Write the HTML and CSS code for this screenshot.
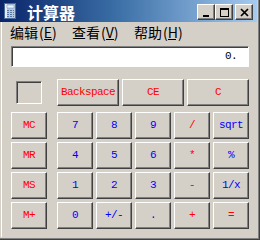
FILE: index.html
```html
<!doctype html>
<html lang="zh-CN">
<head>
	<meta charset="UTF-8">
	<title>计算器</title>
	<link rel="stylesheet" href="styles.css">
</head>
<body>
	<div class="window">
		<div class="titlebar">
			<svg class="app-icon" width="12" height="16" viewBox="0 0 12 16">
				<rect x="0.5" y="0.5" width="11" height="15" fill="#b4c8e0" stroke="#4a6a9a"/>
				<rect x="1" y="1" width="2" height="14" fill="#e4eef8"/>
				<rect x="3" y="2" width="7" height="3" fill="#eef4fa" stroke="#6a88b0" stroke-width="0.5"/>
				<g fill="#5a78a4">
					<rect x="3" y="7" width="2" height="1"/><rect x="6" y="7" width="2" height="1"/><rect x="9" y="7" width="1" height="1"/>
					<rect x="3" y="9" width="2" height="1"/><rect x="6" y="9" width="2" height="1"/><rect x="9" y="9" width="1" height="1"/>
					<rect x="3" y="11" width="2" height="1"/><rect x="6" y="11" width="2" height="1"/><rect x="9" y="11" width="1" height="1"/>
					<rect x="3" y="13" width="2" height="1"/><rect x="6" y="13" width="2" height="1"/><rect x="9" y="13" width="1" height="1"/>
				</g>
			</svg>
			<span class="title">计算器</span>
			<div class="caption">
				<span class="cap-btn">
					<svg width="16" height="14" viewBox="0 0 16 14"><rect x="5" y="10" width="6" height="2" fill="#000"/></svg>
				</span>
				<span class="cap-btn">
					<svg width="16" height="14" viewBox="0 0 16 14"><path d="M4 3h9v9h-9z M5 5v6h7v-6z" fill="#000" fill-rule="evenodd"/></svg>
				</span>
				<span class="cap-btn close">
					<svg width="16" height="14" viewBox="0 0 16 14"><path d="M5 4L12 11M12 4L5 11" stroke="#000" stroke-width="1.7"/></svg>
				</span>
			</div>
		</div>
		<div class="content">
			<div class="menubar">
				<span class="menu">编辑<span class="acc">(E)</span></span>
				<span class="menu">查看<span class="acc">(V)</span></span>
				<span class="menu">帮助<span class="acc">(H)</span></span>
			</div>
			<div class="client">
				<div class="display">0.</div>
				<div class="keys">
					<div class="side">
						<div class="mem-slot"><div class="mem"></div></div>
						<button class="btn red">MC</button>
						<button class="btn red">MR</button>
						<button class="btn red">MS</button>
						<button class="btn red">M+</button>
					</div>
					<div class="main">
						<div class="top-row">
							<button class="btn red">Backspace</button>
							<button class="btn red">CE</button>
							<button class="btn red">C</button>
						</div>
						<div class="grid">
							<button class="btn">7</button>
							<button class="btn">8</button>
							<button class="btn">9</button>
							<button class="btn red">/</button>
							<button class="btn">sqrt</button>
							<button class="btn">4</button>
							<button class="btn">5</button>
							<button class="btn">6</button>
							<button class="btn red">*</button>
							<button class="btn">%</button>
							<button class="btn">1</button>
							<button class="btn">2</button>
							<button class="btn">3</button>
							<button class="btn red">-</button>
							<button class="btn">1/x</button>
							<button class="btn">0</button>
							<button class="btn">+/-</button>
							<button class="btn">.</button>
							<button class="btn red">+</button>
							<button class="btn red">=</button>
						</div>
					</div>
				</div>
			</div>
		</div>
	</div>
</body>
</html>
```

FILE: styles.css
```css
*{
	box-sizing: border-box;
}
body{
	margin: 0;
	background: #d4d0c8;
}
.window{
	width: 260px;
	height: 240px;
	background: #d4d0c8;
	border-right: 1px solid #404040;
	border-bottom: 1px solid #404040;
	box-shadow: inset -1px -1px #808080;
	padding: 0 2px 2px 0;
	display: flex;
	flex-direction: column;
}
.titlebar{
	height: 22px;
	flex: none;
	background: linear-gradient(to right, #0a246a 0%, #3a6ea5 45%, #a6caf0 100%);
	display: flex;
	align-items: flex-start;
	padding: 3px 4px 0 4px;
}
.app-icon{
	flex: none;
}
.title{
	color: #fff;
	font: bold 16px/16px "Noto Sans CJK SC", sans-serif;
	margin: 1px 0 0 11px;
}
.caption{
	margin: 1px 0 0 auto;
	display: flex;
}
.cap-btn{
	width: 18px;
	height: 16px;
	background: #d4d0c8;
	border: 1px solid;
	border-color: #fff #404040 #404040 #fff;
	box-shadow: inset -1px -1px #808080;
}
.cap-btn svg{
	display: block;
}
.cap-btn.close{
	margin-left: 2px;
}
.content{
	flex: 1;
	margin-left: 1px;
	border-left: 1px solid #fff;
}
.menubar{
	height: 19px;
	display: flex;
	padding: 2px 0 0 8px;
	font: 14px/17px "Noto Sans CJK SC", sans-serif;
	color: #000;
}
.menu{
	width: 62px;
	white-space: nowrap;
}
.acc{
	display: inline-block;
	padding: 0 1px;
	background: linear-gradient(#000, #000) no-repeat 6px 15px / 8px 1px;
}
.client{
	padding: 5px 0 0 9px;
}
.display{
	width: 238px;
	height: 21px;
	background: #fff;
	border: 1px solid;
	border-color: #808080 #fff #fff #808080;
	box-shadow: inset 1px 1px #404040;
	text-align: right;
	padding-right: 11px;
	font: 11px/19px "Liberation Mono", monospace;
	letter-spacing: -0.6px;
	color: #000;
}
.keys{
	display: flex;
	margin-top: 12px;
}
.side{
	width: 36px;
	margin-right: 10px;
	display: flex;
	flex-direction: column;
	gap: 3px;
}
.mem-slot{
	height: 27px;
	margin-bottom: 3px;
	display: flex;
	align-items: center;
	justify-content: center;
}
.mem{
	width: 26px;
	height: 23px;
	border: 1px solid;
	border-color: #808080 #fff #fff #808080;
	box-shadow: inset 1px 1px #404040;
}
.main{
	width: 192px;
	display: flex;
	flex-direction: column;
}
.top-row{
	display: grid;
	grid-template-columns: repeat(3, 1fr);
	gap: 3px;
	height: 27px;
	margin-bottom: 6px;
}
.grid{
	display: grid;
	grid-template-columns: repeat(5, 36px);
	grid-auto-rows: 27px;
	gap: 3px;
}
.btn{
	height: 27px;
	margin: 0;
	padding: 0;
	background: #d4d0c8;
	border: 1px solid;
	border-color: #fff #404040 #404040 #fff;
	box-shadow: inset -1px -1px #808080;
	font: 11px/1 "Liberation Mono", monospace;
	letter-spacing: -0.6px;
	color: #00f;
}
.btn.red{
	color: #f00;
}
```
